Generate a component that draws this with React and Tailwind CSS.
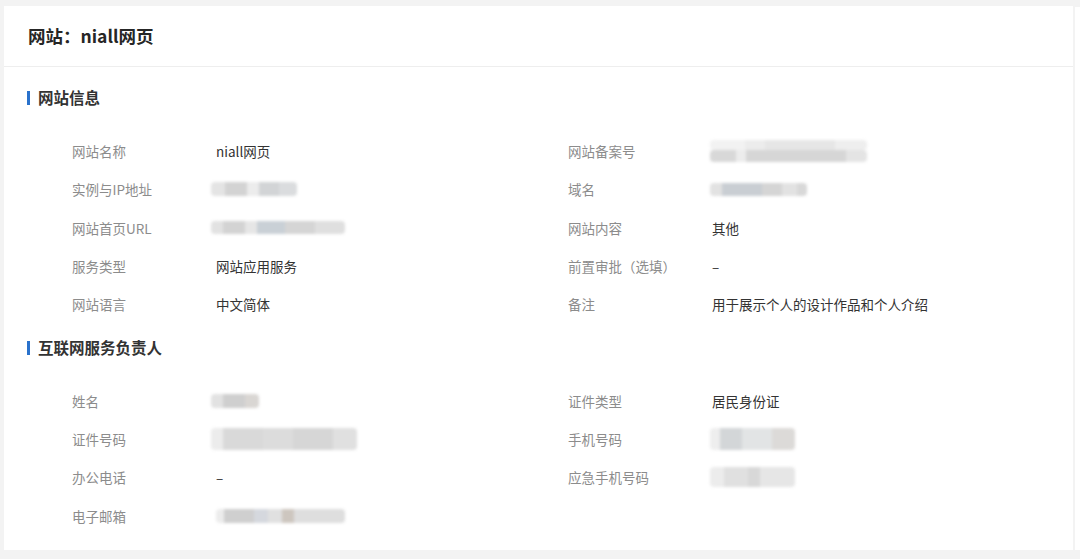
const font = { fontFamily: '"Noto Sans CJK SC", "Noto Sans", sans-serif' };

// blurred placeholder: list of [width, color] segments
const Blur = ({ w, h, segs, blur = "blur-[1.5px]", ml = "ml-[-5px]" }) => (
  <div className={`flex overflow-hidden rounded-sm ${blur} ${ml}`} style={{ width: w, height: h }}>
    {segs.map(([sw, c], i) => (
      <div key={i} style={{ width: sw, background: c }} className="h-full shrink-0" />
    ))}
  </div>
);

const Row = ({ label, value }) => (
  <div className="flex items-center h-[38.33px]">
    <div className="w-[144px] shrink-0 text-[13.5px] text-[#8c8c8c]">{label}</div>
    <div className="text-[13.5px] text-[#333]">{value}</div>
  </div>
);

const Section = ({ title }) => (
  <div className="flex items-center h-[22px]">
    <div className="w-[2.5px] h-[14px] bg-[#2a72cc] mr-[8.5px]" />
    <div className="text-[15.5px] font-bold text-[#333]">{title}</div>
  </div>
);

const Grid = ({ left, right }) => (
  <div className="grid grid-cols-[496px_496px] pl-[45px]">
    <div className="flex flex-col">
      {left.map((r) => (
        <Row key={r.label} {...r} />
      ))}
    </div>
    <div className="flex flex-col">
      {right.map((r) => (
        <Row key={r.label} {...r} />
      ))}
    </div>
  </div>
);

export default function App() {
  const site = {
    left: [
      { label: "网站名称", value: "niall网页" },
      {
        label: "实例与IP地址",
        value: (
          <Blur w={86} h={14} segs={[[14, "#e4e4e4"], [22, "#d3d3d3"], [12, "#ececec"], [20, "#d2d4d6"], [18, "#dadcde"]]} />
        ),
      },
      {
        label: "网站首页URL",
        value: (
          <Blur w={134} h={13} segs={[[12, "#e2e2e2"], [22, "#d3d3d3"], [12, "#e6e6e6"], [28, "#c9d0d6"], [30, "#d5d5d5"], [30, "#dfdfdf"]]} />
        ),
      },
      { label: "服务类型", value: "网站应用服务" },
      { label: "网站语言", value: "中文简体" },
    ],
    right: [
      {
        label: "网站备案号",
        value: (
          <div className="flex flex-col ml-[-2px] blur-[1.5px]">
            <Blur w={157} h={10} ml="ml-0" blur="" segs={[[35, "#f2f2f2"], [20, "#ececec"], [70, "#e6e6e6"], [32, "#eeeeee"]]} />
            <Blur w={157} h={12} ml="ml-0" blur="" segs={[[26, "#d8d8d8"], [10, "#ececec"], [100, "#d6d6d6"], [21, "#e4e4e4"]]} />
          </div>
        ),
      },
      {
        label: "域名",
        value: (
          <Blur w={97} h={13} ml="ml-[-2px]" segs={[[12, "#e2e2e2"], [40, "#c9ced3"], [20, "#d5d5d5"], [15, "#e2e2e2"], [10, "#d8d8d8"]]} />
        ),
      },
      { label: "网站内容", value: "其他" },
      { label: "前置审批（选填）", value: "–" },
      { label: "备注", value: "用于展示个人的设计作品和个人介绍" },
    ],
  };

  const person = {
    left: [
      {
        label: "姓名",
        value: <Blur w={48} h={14} segs={[[12, "#e2e2e2"], [22, "#cfcfcf"], [14, "#d9d6d3"]]} />,
      },
      {
        label: "证件号码",
        value: (
          <Blur w={146} h={22} segs={[[12, "#ececec"], [40, "#d9d9d9"], [30, "#dcdcdc"], [40, "#d6d6d6"], [24, "#e0e0e0"]]} />
        ),
      },
      { label: "办公电话", value: "–" },
      {
        label: "电子邮箱",
        value: (
          <Blur w={129} h={14} ml="ml-0" segs={[[8, "#ececec"], [30, "#cfcfcf"], [14, "#d5d8de"], [14, "#e0e0e0"], [12, "#cdc6bf"], [51, "#dedede"]]} />
        ),
      },
    ],
    right: [
      { label: "证件类型", value: "居民身份证" },
      {
        label: "手机号码",
        value: (
          <Blur w={85} h={22} ml="ml-[-2px]" segs={[[10, "#eeeeee"], [22, "#d3d6d8"], [30, "#e2e4e5"], [23, "#dcdad8"]]} />
        ),
      },
      {
        label: "应急手机号码",
        value: (
          <Blur w={85} h={20} ml="ml-[-2px]" segs={[[14, "#ececec"], [24, "#e0e0e0"], [12, "#d8d8d8"], [35, "#e6e6e6"]]} />
        ),
      },
    ],
  };

  return (
    <div style={font} className="w-[1080px] h-[559px] bg-[#f3f3f3] flex overflow-hidden">
      <div className="ml-[4px] mt-[6px] w-[1069px] h-[544px] bg-white flex flex-col">
        <div className="h-[61px] border-b border-[#eeeeee] flex items-center pl-[24px]">
          <div className="text-[17.5px] font-bold text-[#262626]">网站：niall网页</div>
        </div>
        <div className="flex flex-col pt-[20px] pl-[23px]">
          <Section title="网站信息" />
          <div className="mt-[23px]">
            <Grid left={site.left} right={site.right} />
          </div>
          <div className="mt-[13px]">
            <Section title="互联网服务负责人" />
          </div>
          <div className="mt-[23px]">
            <Grid left={person.left} right={person.right} />
          </div>
        </div>
      </div>
      <div className="ml-[2px] mt-[7px] flex-1 h-[543px] bg-white" />
    </div>
  );
}
